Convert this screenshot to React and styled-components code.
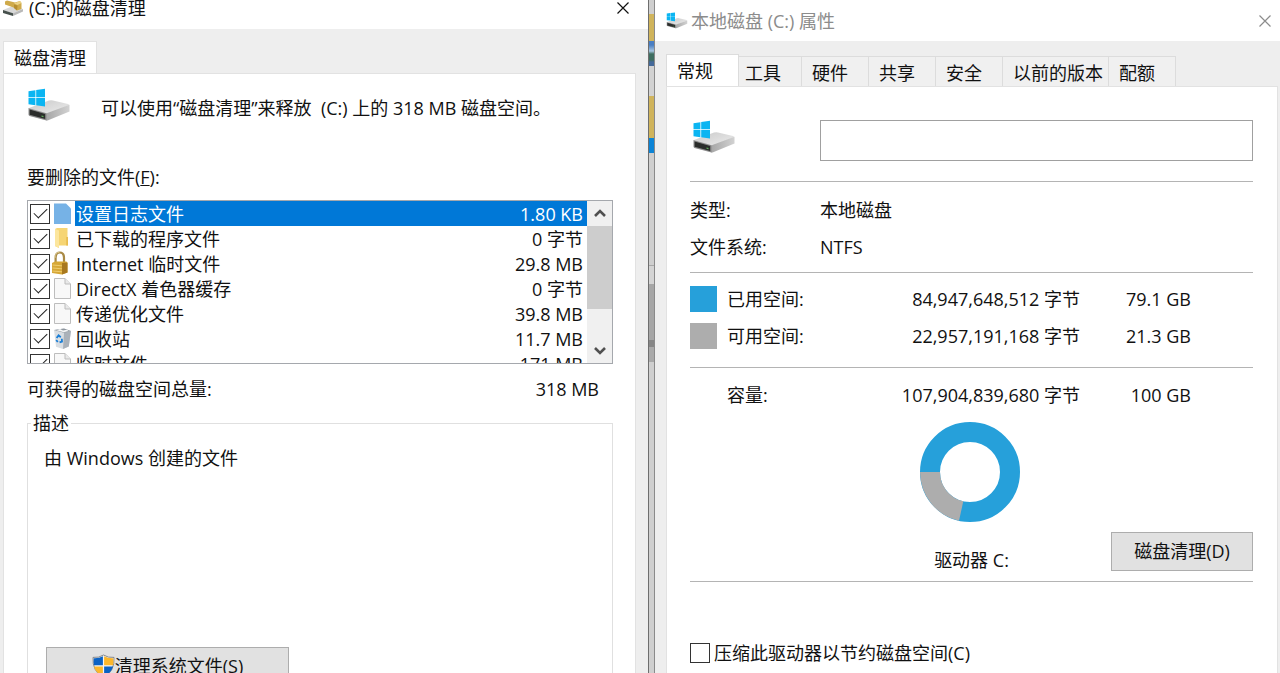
import React, { useState } from "react";
import styled, { createGlobalStyle } from "styled-components";

const FILES = [
	{ name: "设置日志文件", size: "1.80 KB", icon: "selected" },
	{ name: "已下载的程序文件", size: "0 字节", icon: "folder" },
	{ name: "Internet 临时文件", size: "29.8 MB", icon: "lock" },
	{ name: "DirectX 着色器缓存", size: "0 字节", icon: "page" },
	{ name: "传递优化文件", size: "39.8 MB", icon: "page" },
	{ name: "回收站", size: "11.7 MB", icon: "bin" },
	{ name: "临时文件", size: "171 MB", icon: "page" },
];

const TABS = ["常规", "工具", "硬件", "共享", "安全", "以前的版本", "配额"];

const DriveIcon = ({ width, height }) => (
	<svg width={width} height={height} viewBox="0 0 44 34" aria-hidden="true">
		<defs>
			<linearGradient id="driveTop" x1="0" y1="0" x2="1" y2="1">
				<stop offset="0" stopColor="#c9c9c9" />
				<stop offset="1" stopColor="#ededed" />
			</linearGradient>
			<linearGradient id="driveSide" x1="0" y1="0" x2="1" y2="0">
				<stop offset="0" stopColor="#a6a6a6" />
				<stop offset="1" stopColor="#d2d2d2" />
			</linearGradient>
		</defs>
		<path d="M2 20 L22 12.5 Q24 12 26 12.4 L41 16 Q43 16.6 41.5 17.6 L20 26 Z" fill="url(#driveTop)" />
		<path d="M19 25.5 L42.5 16.8 V23.5 L20.5 32.4 L19 32.4 Z" fill="url(#driveSide)" />
		<path d="M1.5 20 L19.5 25.2 V32.6 L2.5 28 Q1.5 27.6 1.5 26.6 Z" fill="#8b8b8b" />
		<path d="M2.6 21.6 L18.2 26 V31 L2.6 26.8 Z" fill="#2b2d2b" />
		<path d="M14.5 27.4 l2 .5 v1.3 l-2 -.5 Z" fill="#5fae5b" />
		<path d="M1.5 3.2 L8.4 2.2 V9.3 H1.5 Z M9.2 2.1 L18 .8 V9.3 H9.2 Z M1.5 10.1 H8.4 V17.2 L1.5 16.3 Z M9.2 10.1 H18 V18.5 L9.2 17.3 Z" fill="#0bb5f2" />
	</svg>
);

const CleanupIcon = () => (
	<svg width="22" height="18" viewBox="0 0 22 18" aria-hidden="true">
		<path d="M1 11 L11 7 L21 10 L11 14.5 Z" fill="#d8d8d8" />
		<path d="M11 14.2 L21 10 V12.6 L11 17 Z" fill="#b9b9b9" />
		<path d="M1 11 L11 14.2 V17 L1 14 Z" fill="#46504c" />
		<path d="M3 2.5 L5 1.5 L13 3.5 L18 2 L19.5 4 V10 L15 11.6 L11.5 8.4 L3 5.5 Z" fill="#cfaa4b" />
		<path d="M12 4.5 L18 2 L19.5 4 L15.5 6 Z" fill="#ecd388" />
		<path d="M12 5.5 L15.5 6.4 L15 11.6 L12 9 Z" fill="#b58d30" />
	</svg>
);

const CloseIcon = () => (
	<svg width="12" height="12" viewBox="0 0 12 12" aria-hidden="true">
		<path d="M.5 .5 L11.5 11.5 M11.5 .5 L.5 11.5" stroke="currentColor" strokeWidth="1.2" />
	</svg>
);

const ShieldIcon = () => (
	<svg width="23" height="25" viewBox="0 0 23 25" aria-hidden="true">
		<path d="M11.5 1 Q16 4 22 3.4 Q23 17 11.5 24 Q0 17 1 3.4 Q7 4 11.5 1 Z" fill="#f5f5f5" stroke="#6d7176" strokeWidth=".8" />
		<path d="M10.9 2.2 V11.2 H1.9 Q1.4 8 1.7 4.3 Q6.8 4.6 10.9 2.2 Z" fill="#0b62c4" />
		<path d="M12.1 2.2 Q16.2 4.6 21.3 4.3 Q21.6 8 21.1 11.2 H12.1 Z" fill="#fbb72c" />
		<path d="M1.9 12.4 H10.9 V22.8 Q3.6 18.6 1.9 12.4 Z" fill="#fbb72c" />
		<path d="M12.1 12.4 H21.1 Q19.4 18.6 12.1 22.8 Z" fill="#0b62c4" />
	</svg>
);

const FileIcon = ({ type }) => (
	<svg width="25" height="25" viewBox="0 0 25 25" aria-hidden="true">
		{type === "selected" && <path d="M4 2.5 H16 L21 7.5 V23 H4 Z" fill="#76b2e6" />}
		{type === "page" && (
			<g stroke="#bdbdbd" strokeLinejoin="round">
				<path d="M4.5 2.5 H15 L20.5 8 V22.5 H4.5 Z" fill="#f8f8f8" />
				<path d="M15 2.5 V8 H20.5" fill="#e9e9e9" />
			</g>
		)}
		{type === "folder" && (
			<g>
				<path d="M5 3 L7 2 H17.5 V10 L18 19.5 H9 V22 L5 20 Z" fill="#f6d574" />
				<path d="M5 3 L9 4.5 V22 L5 20 Z" fill="#fce69e" />
				<path d="M16.2 11 H18 V19.5 H16.2 Z" fill="#e9bd50" />
			</g>
		)}
		{type === "lock" && (
			<g>
				<path d="M5.6 12 V6.8 Q5.6 1.5 9.8 1.5 Q14 1.5 14 6.8 V12" fill="none" stroke="#a98a45" strokeWidth="2.2" />
				<path d="M5 7 Q5 1.4 9.5 1.2" fill="none" stroke="#e5d6a0" strokeWidth=".8" />
				<path d="M2 12 L5 10.5 H16.5 L17.5 12 V21.5 L12 23.5 L2 22 Z" fill="#d6a736" />
				<path d="M12 12 L17.5 11.5 V21.5 L12 23.5 Z" fill="#a8781f" />
				<path d="M2.5 14 L12 14.8 M2.5 17 L12 17.8 M2.5 20 L12 20.8" stroke="#f0d074" strokeWidth=".9" />
			</g>
		)}
		{type === "bin" && (
			<g>
				<path d="M4 4 L14 2.5 L21 5 L18.8 20.5 L13 23 L6 20.8 Z" fill="#d9dee3" />
				<path d="M14 6.5 L21 5 L18.8 20.5 L13 23 Z" fill="#aab1b9" />
				<path d="M4 4 L14 2.5 L21 5 L14 6.8 Z" fill="#8f979f" />
				<path d="M6.5 4.2 L10 3 L13 4.4 L17 3.8 L18.5 5.1 L13.8 6.2 Z" fill="#f5f6f7" />
				<path d="M6.6 12 L8.6 9.4 L10.8 11.2 M11.8 12.8 L12 15.6 L9.6 16.4 M7.8 16 L6.2 14" fill="none" stroke="#1b7fd6" strokeWidth="1.8" />
			</g>
		)}
	</svg>
);

const Donut = () => (
	<svg width="100" height="100" viewBox="0 0 100 100" role="img" aria-label="已用空间 79.1 GB">
		<circle cx="50" cy="50" r="40" fill="none" stroke="#26a0da" strokeWidth="20" />
		<path d="M0 50 A50 50 0 0 0 39 98.8 L43.3 79.3 A30 30 0 0 1 20 50 Z" fill="#adadad" />
	</svg>
);

const CleanupWindow = () => {
	const [checked, setChecked] = useState(FILES.map(() => true));
	const toggle = (index) => setChecked(checked.map((on, i) => (i === index ? !on : on)));

	return (
		<Window>
			<TitleBar>
				<CleanupIcon />
				<Title>(C:)的磁盘清理</Title>
				<CloseButton aria-label="关闭">
					<CloseIcon />
				</CloseButton>
			</TitleBar>
			<CleanupBody>
				<TabRow>
					<CleanupTab>磁盘清理</CleanupTab>
				</TabRow>
				<CleanupPanel>
					<Intro>
						<DriveIcon width={44} height={34} />
						<span>可以使用“磁盘清理”来释放&nbsp; (C:) 上的 318 MB 磁盘空间。</span>
					</Intro>
					<Heading>
						要删除的文件(<u>F</u>):
					</Heading>
					<ListBox>
						<Rows>
							{FILES.map((file, index) => (
								<Row key={file.name}>
									<Checkbox type="checkbox" checked={checked[index]} onChange={() => toggle(index)} />
									<FileIcon type={file.icon} />
									<RowText $selected={index === 0}>
										<span>{file.name}</span>
										<span>{file.size}</span>
									</RowText>
								</Row>
							))}
						</Rows>
						<ScrollBar>
							<ScrollButton aria-label="向上滚动">
								<svg width="12" height="9" viewBox="0 0 12 9">
									<path d="M1 7 L6 2 L11 7" fill="none" stroke="#505050" strokeWidth="2.6" />
								</svg>
							</ScrollButton>
							<Thumb />
							<ScrollButton aria-label="向下滚动">
								<svg width="12" height="9" viewBox="0 0 12 9">
									<path d="M1 2 L6 7 L11 2" fill="none" stroke="#505050" strokeWidth="2.6" />
								</svg>
							</ScrollButton>
						</ScrollBar>
					</ListBox>
					<Total>
						<span>可获得的磁盘空间总量:</span>
						<span>318 MB</span>
					</Total>
					<Group>
						<legend>描述</legend>
						<GroupText>由 Windows 创建的文件</GroupText>
						<SystemButton>
							<ShieldIcon />
							清理系统文件(S)
						</SystemButton>
					</Group>
				</CleanupPanel>
			</CleanupBody>
		</Window>
	);
};

const PropertiesWindow = () => {
	const [active, setActive] = useState(0);

	return (
		<Window>
			<TitleBar $inactive>
				<DriveIcon width={22} height={17} />
				<Title>本地磁盘 (C:) 属性</Title>
				<CloseButton aria-label="关闭">
					<CloseIcon />
				</CloseButton>
			</TitleBar>
			<PropertiesBody>
				<TabRow role="tablist">
					{TABS.map((tab, index) => (
						<Tab key={tab} role="tab" aria-selected={index === active} $active={index === active} onClick={() => setActive(index)}>
							{tab}
						</Tab>
					))}
				</TabRow>
				<PropertiesPanel>
					<NameRow>
						<DriveIcon width={44} height={34} />
						<NameInput type="text" aria-label="卷标" />
					</NameRow>
					<Facts>
						<dt>类型:</dt>
						<dd>本地磁盘</dd>
						<dt>文件系统:</dt>
						<dd>NTFS</dd>
					</Facts>
					<Usage>
						<colgroup>
							<col width="37" />
							<col width="133" />
							<col width="220" />
							<col width="111" />
							<col />
						</colgroup>
						<tbody>
							<tr>
								<td>
									<Swatch $color="#26a0da" />
								</td>
								<th scope="row">已用空间:</th>
								<td>84,947,648,512 字节</td>
								<td>79.1 GB</td>
								<td />
							</tr>
							<FreeRow>
								<td>
									<Swatch $color="#adadad" />
								</td>
								<th scope="row">可用空间:</th>
								<td>22,957,191,168 字节</td>
								<td>21.3 GB</td>
								<td />
							</FreeRow>
							<CapacityRow>
								<td />
								<th scope="row">容量:</th>
								<td>107,904,839,680 字节</td>
								<td>100 GB</td>
								<td />
							</CapacityRow>
						</tbody>
					</Usage>
					<Chart>
						<Donut />
					</Chart>
					<DriveRow>
						<DriveName>驱动器 C:</DriveName>
						<CleanButton>磁盘清理(D)</CleanButton>
					</DriveRow>
					<Compress>
						<Checkbox type="checkbox" />
						压缩此驱动器以节约磁盘空间(C)
					</Compress>
				</PropertiesPanel>
			</PropertiesBody>
		</Window>
	);
};

const App = () => (
	<>
		<GlobalStyle />
		<Desktop>
			<CleanupWindow />
			<Strip />
			<PropertiesWindow />
		</Desktop>
	</>
);

export default App;

const GlobalStyle = createGlobalStyle`
	* {
		box-sizing: border-box;
	}
	body {
		margin: 0;
		overflow: hidden;
	}
	body, button, input {
		font-family: "Open Sans", "Noto Sans CJK SC", sans-serif;
		font-size: 18px;
		line-height: 24px;
		color: #111;
	}
	svg {
		flex: none;
		display: block;
	}
`;

const Desktop = styled.main`
	display: grid;
	grid-template-columns: 648fr 7px 625fr;
	height: 100vh;
	overflow: hidden;
`;

/* sliver of desktop that shows between the two windows */
const Strip = styled.div`
	border-left: 1px solid #6e6e6e;
	border-right: 1px solid #8a8a8a;
	background: linear-gradient(
		#cfcfcf 14px,
		#d0b45c 14px 41px,
		#4a7fc4 41px 45px,
		#a9c6e0 51px,
		#3f6e60 54px 60px,
		#44699a 62px 66px,
		#d2d2d2 66px 96px,
		#d0b45c 96px 138px,
		#0c84d6 138px 153px,
		#cfcfcf 153px 265px,
		#a8a8a8 265px 266px,
		#d4d4d4 266px 284px,
		#a6a6a6 284px 340px,
		#868686 340px 347px,
		#a9a9a9 347px 362px,
		#cfcfcf 362px
	);
`;

const Window = styled.section`
	display: flex;
	flex-direction: column;
	min-width: 0;
	height: 100vh;
	overflow: hidden;
	background: #eee;
`;

const TitleBar = styled.header`
	display: flex;
	align-items: center;
	flex: none;
	gap: ${({ $inactive }) => ($inactive ? "3px" : "5px")};
	height: ${({ $inactive }) => ($inactive ? "41px" : "29px")};
	padding: ${({ $inactive }) => ($inactive ? "0 9px 0 11px" : "0 19px 13px 2px")};
	background: #fff;
	color: ${({ $inactive }) => ($inactive ? "#8c8c8c" : "#111")};
`;

const Title = styled.h1`
	flex: 1;
	margin: 0;
	font-size: 18px;
	font-weight: 400;
`;

const CloseButton = styled.button`
	padding: 0;
	border: 0;
	background: none;
	color: inherit;
`;

const CleanupBody = styled.div`
	flex: 1;
	padding: 12px 12px 0 3px;
`;

const PropertiesBody = styled.div`
	flex: 1;
	padding: 13px 2px 0 11px;
`;

const TabRow = styled.div`
	display: flex;
	align-items: flex-end;
`;

const CleanupTab = styled.div`
	height: 32px;
	padding: 4px 10px;
	border: 1px solid #e2e2e2;
	border-bottom: 0;
	background: #fff;
`;

const Tab = styled.button`
	height: ${({ $active }) => ($active ? "32px" : "30px")};
	min-width: ${({ $active }) => ($active ? "73px" : "67px")};
	margin-right: ${({ $active }) => ($active ? "-4px" : "0")};
	padding: ${({ $active }) => ($active ? "0 10px" : "3px 5px 0 10px")};
	z-index: ${({ $active }) => ($active ? 1 : 0)};
	border: 1px solid #dcdcdc;
	border-width: ${({ $active }) => ($active ? "1px 1px 0" : "1px 1px 0 0")};
	background: ${({ $active }) => ($active ? "#fff" : "#f0f0f0")};
	text-align: left;
`;

const CleanupPanel = styled.div`
	height: 100%;
	padding: 14px 22px 0 23px;
	border: 1px solid #e2e2e2;
	background: #fff;
`;

const PropertiesPanel = styled.div`
	height: 100%;
	padding: 33px 24px 0 23px;
	border: 1px solid #e2e2e2;
	background: #fff;
`;

const Intro = styled.div`
	display: flex;
	gap: 30px;

	span {
		padding-top: 8px;
	}
`;

const Heading = styled.h2`
	margin: 43px 0 11px;
	font-size: 18px;
	font-weight: 400;
`;

const ListBox = styled.div`
	display: flex;
	height: 164px;
	border: 1px solid #a5a8ad;
`;

const Rows = styled.div`
	flex: 1;
	overflow: hidden;
	padding-left: 2px;
`;

const Row = styled.label`
	display: flex;
	align-items: center;
	height: 25px;
`;

const RowText = styled.div`
	display: flex;
	flex: 1;
	justify-content: space-between;
	align-items: center;
	height: 25px;
	padding: 0 4px 0 1px;
	background: ${({ $selected }) => ($selected ? "#0078d7" : "transparent")};
	color: ${({ $selected }) => ($selected ? "#fff" : "#111")};
`;

const Checkbox = styled.input`
	appearance: none;
	display: flex;
	justify-content: center;
	flex: none;
	width: 20px;
	height: 20px;
	margin: 0;
	border: 1px solid #333;
	background: #fff;

	&:checked::after {
		content: "";
		width: 6px;
		height: 12px;
		border: solid #222;
		border-width: 0 1px 1px 0;
		transform: rotate(45deg);
	}
`;

const ScrollBar = styled.div`
	display: flex;
	flex-direction: column;
	width: 25px;
	background: #f0f0f0;
`;

const ScrollButton = styled.button`
	display: flex;
	align-items: center;
	justify-content: center;
	height: 25px;
	padding: 0;
	border: 0;
	background: none;
`;

const Thumb = styled.div`
	height: 83px;
	margin-bottom: auto;
	background: #cdcdcd;
`;

const Total = styled.div`
	display: flex;
	justify-content: space-between;
	padding: 13px 14px 10px 0;
`;

const Group = styled.fieldset`
	margin: 0;
	padding: 11px 16px 20px;
	border: 1px solid #e0e0e0;

	legend {
		margin-left: -13px;
		padding: 0 2px;
	}
`;

const GroupText = styled.p`
	margin: 0 0 177px;
`;

const SystemButton = styled.button`
	display: flex;
	align-items: center;
	justify-content: center;
	width: 243px;
	height: 38px;
	margin-left: 2px;
	border: 1px solid #adadad;
	background: #e1e1e1;
`;

const NameRow = styled.div`
	display: flex;
	gap: 84px;
	padding: 0 0 20px 2px;
	border-bottom: 1px solid #b4b4b4;
`;

const NameInput = styled.input`
	flex: 1;
	min-width: 0;
	height: 41px;
	padding: 0 8px;
	border: 1px solid #a0a0a0;
	background: #fff;
	outline: none;
`;

const Facts = styled.dl`
	display: grid;
	grid-template-columns: 130px 1fr;
	row-gap: 13px;
	margin: 0;
	padding: 16px 0 13px;
	border-bottom: 1px solid #b4b4b4;

	dd {
		margin: 0;
	}
`;

const Usage = styled.table`
	width: 100%;
	margin-top: 7px;
	table-layout: fixed;
	border-collapse: collapse;

	td,
	th {
		height: 37px;
		padding: 0;
		font-weight: 400;
		text-align: left;
		white-space: nowrap;
	}
	td:nth-child(n + 3) {
		text-align: right;
	}
`;

const FreeRow = styled.tr`
	td,
	th {
		height: 50px;
		padding-bottom: 12px;
	}
`;

const CapacityRow = styled.tr`
	td,
	th {
		height: 55px;
		border-top: 1px solid #b4b4b4;
	}
`;

const Swatch = styled.div`
	width: 27px;
	height: 26px;
	background: ${({ $color }) => $color};
`;

const Chart = styled.div`
	display: flex;
	justify-content: center;
	padding-right: 4px;
`;

const DriveRow = styled.div`
	display: grid;
	grid-template-columns: 1fr auto 1fr;
	align-items: center;
	padding: 8px 0 9px;
	border-bottom: 1px solid #b4b4b4;
`;

const DriveName = styled.span`
	grid-column: 2;
	padding-top: 18px;
`;

const CleanButton = styled.button`
	justify-self: end;
	width: 142px;
	height: 39px;
	padding: 0;
	border: 1px solid #adadad;
	background: #e1e1e1;
`;

const Compress = styled.label`
	display: flex;
	align-items: center;
	gap: 4px;
	margin-top: 59px;
`;
